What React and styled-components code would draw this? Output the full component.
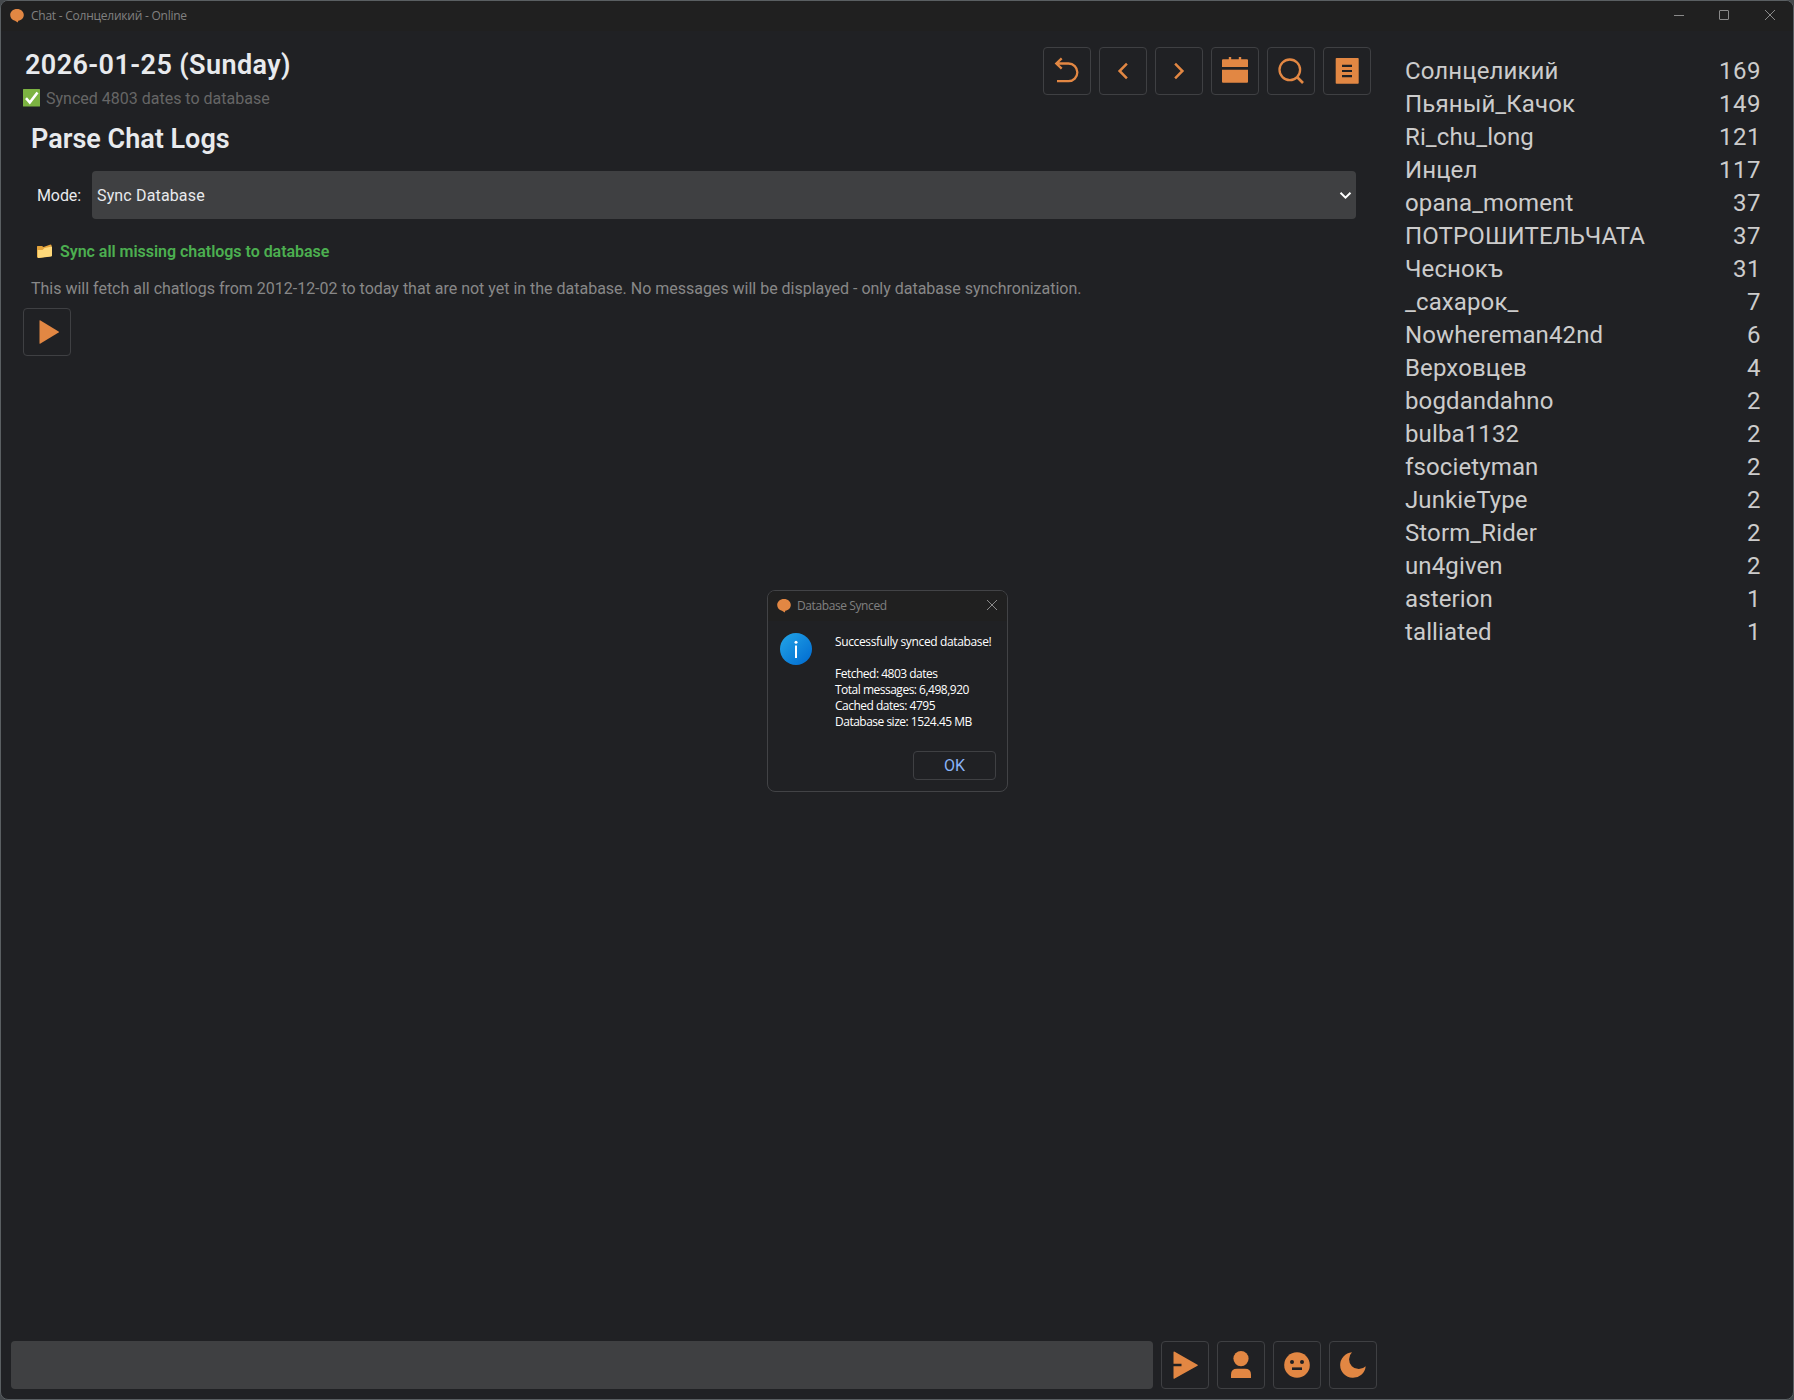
import React, { useState } from 'react';
import styled, { createGlobalStyle } from 'styled-components';

const ACCENT = '#e28743';

const GlobalStyle = createGlobalStyle`
  * {
    box-sizing: border-box;
  }

  body {
    margin: 0;
    background: #45494c;
    font-family: Roboto, sans-serif;
  }
`;

const Window = styled.div`
  position: relative;
  display: flex;
  flex-direction: column;
  width: 1794px;
  height: 1400px;
  overflow: hidden;
  background: #202124;
  border: 1px solid #5a5f62;
  border-radius: 8px;
`;

const TitleBar = styled.div`
  display: flex;
  align-items: center;
  flex: none;
  height: 30px;
  padding-left: 9px;
  background: #202020;
`;

const TitleText = styled.span`
  flex: 1;
  margin-left: ${({ $gap }) => $gap}px;
  color: #808080;
  font-family: 'Open Sans', 'Noto Sans', sans-serif;
  font-size: 12px;
  line-height: 16px;
  letter-spacing: ${({ $spacing }) => $spacing}px;
  white-space: nowrap;
`;

const CaptionButtons = styled.div`
  display: grid;
  grid-template-columns: 45px 46px 12px;
  padding: 0 17px 2px 0;
`;

const Content = styled.div`
  display: flex;
  flex: 1;
  min-height: 0;
`;

const Main = styled.main`
  display: flex;
  flex-direction: column;
  width: 1377px;
  padding: 16px 0 10px 10px;
`;

const Header = styled.header`
  display: flex;
  justify-content: space-between;
  height: 76px;
  padding: 0 7px 0 12px;
`;

const DateTitle = styled.h1`
  margin: 0 0 0 2px;
  color: #e8eaed;
  font-size: 27px;
  font-weight: 600;
  line-height: 36px;
  letter-spacing: 0.4px;
`;

const Status = styled.div`
  display: flex;
  align-items: center;
  gap: 6px;
  height: 30px;
  color: #666;
  font-size: 16px;
`;

const ButtonGroup = styled.div`
  display: flex;
  gap: 8px;
`;

const IconButton = styled.button`
  display: flex;
  align-items: center;
  justify-content: center;
  flex: none;
  width: 48px;
  height: 48px;
  padding: 0;
  color: ${ACCENT};
  background: transparent;
  border: 1px solid #3f4043;
  border-radius: 4px;
  cursor: pointer;
`;

const ParsePanel = styled.section`
  display: flex;
  flex-direction: column;
  flex: 1;
  padding: 0 22px 0 12px;
`;

const ParseTitle = styled.h2`
  margin: 0 0 16px 8px;
  color: #e8eaed;
  font-size: 27px;
  font-weight: 600;
  line-height: 32px;
`;

const ModeRow = styled.label`
  display: flex;
  align-items: center;
  color: #e8eaed;
  font-size: 16px;
`;

const ModeLabel = styled.span`
  width: 69px;
  padding-left: 14px;
  letter-spacing: -0.1px;
`;

const Select = styled.div`
  display: flex;
  align-items: center;
  justify-content: space-between;
  flex: 1;
  height: 48px;
  padding: 0 4px 0 5px;
  letter-spacing: 0.15px;
  background: #3f4042;
  border-radius: 4px;
`;

const SyncTitle = styled.div`
  display: flex;
  align-items: center;
  gap: 8px;
  height: 20px;
  margin: 22px 0 0 14px;
  color: #4caf50;
  font-size: 16px;
  font-weight: 600;
  letter-spacing: -0.03px;
`;

const Description = styled.p`
  margin: 18px 0 9px 8px;
  color: #888;
  font-size: 16px;
  line-height: 20px;
  letter-spacing: -0.01px;
`;

const Composer = styled.form`
  display: flex;
  gap: 8px;
`;

const MessageInput = styled.input`
  width: 1142px;
  height: 48px;
  padding: 0 8px;
  color: #e8eaed;
  font: 16px Roboto, sans-serif;
  background: #3f4042;
  border: 0;
  border-radius: 4px;
  outline: none;
`;

const UserList = styled.ul`
  flex: 1;
  margin: 0;
  padding: 24px 32px 0 27px;
  list-style: none;
`;

const UserRow = styled.li`
  display: flex;
  justify-content: space-between;
  color: #cccccc;
  font-size: 24px;
  line-height: 33px;
  letter-spacing: 0.12px;
`;

const UserCount = styled.span`
  letter-spacing: 0.5px;
`;

const Dialog = styled.div`
  position: absolute;
  top: 589px;
  left: 766px;
  display: flex;
  flex-direction: column;
  width: 241px;
  height: 202px;
  overflow: hidden;
  background: #202124;
  border: 1px solid #424346;
  border-radius: 8px;
`;

const DialogClose = styled.div`
  display: flex;
  padding: 0 9px 2px 0;
`;

const DialogBody = styled.div`
  display: flex;
  gap: 23px;
  height: 108px;
  padding: 12px 0 0 12px;
`;

const DialogText = styled.div`
  padding-top: 1px;
  color: #fff;
  font-family: 'Open Sans', 'Noto Sans', sans-serif;
  font-size: 12px;
  line-height: 16px;
`;

const DialogLine = styled.p`
  margin: ${({ $lead }) => ($lead ? '0 0 16px' : '0')};
  letter-spacing: ${({ $lead }) => ($lead ? -0.36 : -0.5)}px;
  white-space: nowrap;
`;

const OkButton = styled.button`
  align-self: flex-end;
  width: 83px;
  height: 29px;
  margin: 22px 11px 0 0;
  padding: 0;
  color: #8ab4f8;
  font: 16px Roboto, sans-serif;
  background: transparent;
  border: 1px solid #3f4043;
  border-radius: 4px;
`;

const BubbleIcon = () => (
  <svg width="14" height="14" viewBox="0 0 14 14" fill={ACCENT}>
    <path d="M7 0C3 0 .2 2.700.2 6c0 2.900 2 5 4.800 5.700L7.800 13.500 8.300 11.700C11.600 11.200 13.800 9 13.800 6 13.800 2.700 11 0 7 0Z" />
  </svg>
);

const MinimizeIcon = () => (
  <svg width="12" height="12" viewBox="0 0 12 12" stroke="#8a8a8a">
    <path d="M1 6.500H11" />
  </svg>
);

const MaximizeIcon = () => (
  <svg width="12" height="12" viewBox="0 0 12 12" fill="none" stroke="#8a8a8a">
    <rect x="1.500" y="1.500" width="9" height="9" rx="0.500" />
  </svg>
);

const CloseIcon = () => (
  <svg width="12" height="12" viewBox="0 0 12 12" stroke="#8a8a8a">
    <path d="M1 1 11 11M11 1 1 11" />
  </svg>
);

const CheckIcon = () => (
  <svg width="17" height="18" viewBox="0 0 17 18">
    <rect width="17" height="17.500" rx="0.500" fill="#7cb342" />
    <path d="M3 9.200 6.800 13.500 14.500 3.500" fill="none" stroke="#fff" strokeWidth="2.600" />
  </svg>
);

const FolderIcon = () => (
  <svg width="15" height="14" viewBox="0 0 15 14">
    <path d="M0 2.500Q0 2 .6 2H5L6.500 3 13.500.6 14.500 1V12L1 14 0 13Z" fill="#e3a33c" />
    <path d="M.7 6H5.500L7.500 4 15 2.500V11.500Q15 12.300 14.300 12.400L1.500 14Q.7 14 .7 13.300Z" fill="#ffd97a" />
  </svg>
);

const UndoIcon = () => (
  <svg width="46" height="46" viewBox="0 0 46 46" fill="none" stroke="currentColor" strokeWidth="2.300">
    <path d="M17.700 10.300 12.300 15.500 17.700 20.700M12.300 15.500H24.500A8.800 8.800 0 0 1 24.500 33.200H13" />
  </svg>
);

const PrevIcon = () => (
  <svg width="46" height="46" viewBox="0 0 46 46" fill="none" stroke="currentColor" strokeWidth="2.500">
    <path d="M26.900 15.700 19.600 23 26.900 30.300" />
  </svg>
);

const NextIcon = () => (
  <svg width="46" height="46" viewBox="0 0 46 46" fill="none" stroke="currentColor" strokeWidth="2.500">
    <path d="M19.100 15.700 26.400 23 19.100 30.300" />
  </svg>
);

const CalendarIcon = () => (
  <svg width="46" height="46" viewBox="0 0 46 46" fill="currentColor">
    <path d="M11 11.200H16.800V9H19.200V11.200H26.800V9H29.200V11.200H35Q36 11.200 36 12.200V19H10V12.200Q10 11.200 11 11.200Z" />
    <path d="M10 21.700H36V33.700Q36 34.700 35 34.700H11Q10 34.700 10 33.700Z" />
  </svg>
);

const SearchIcon = () => (
  <svg width="46" height="46" viewBox="0 0 46 46" fill="none" stroke="currentColor">
    <circle cx="21.800" cy="21.800" r="10.300" strokeWidth="2.300" />
    <path d="M29 29 35 35" strokeWidth="2.600" />
  </svg>
);

const NotesIcon = () => (
  <svg width="46" height="46" viewBox="0 0 46 46">
    <rect x="11.700" y="10" width="23" height="25.700" rx="0.800" fill="currentColor" />
    <path d="M18 17.800H28M18 23H28M18 28.200H28" stroke="#202124" strokeWidth="2.200" />
  </svg>
);

const PlayIcon = () => (
  <svg width="46" height="46" viewBox="0 0 46 46" fill="currentColor">
    <path d="M15.500 11.800Q15.500 10.800 16.500 11.400L34.600 22.400Q35.400 23 34.600 23.600L16.500 34.600Q15.500 35.200 15.500 34.200Z" />
  </svg>
);

const SendIcon = () => (
  <svg width="46" height="46" viewBox="0 0 46 46" fill="currentColor">
    <path d="M11.500 10.400Q11.500 9 12.700 9.700L35.500 22.700Q36.400 23.200 35.500 23.700L12.700 36.600Q11.500 37.300 11.500 36V24.200H19.500V21.800H11.500Z" />
  </svg>
);

const UserIcon = () => (
  <svg width="46" height="46" viewBox="0 0 46 46" fill="currentColor">
    <circle cx="23" cy="16.600" r="7.600" />
    <path d="M13 36V32.500Q13 26.700 19 26.700H27Q33 26.700 33 32.500V36Z" />
  </svg>
);

const FaceIcon = () => (
  <svg width="46" height="46" viewBox="0 0 46 46">
    <circle cx="23" cy="23" r="12.800" fill="currentColor" />
    <g fill="#202124">
      <circle cx="18" cy="20" r="2" />
      <circle cx="28" cy="20" r="2" />
      <rect x="18" y="25.400" width="10" height="2.600" />
    </g>
  </svg>
);

const MoonIcon = () => (
  <svg width="46" height="46" viewBox="0 0 46 46" fill="currentColor">
    <path d="M22 10.300A12.800 12.800 0 1 0 35.700 24.300 9.600 9.600 0 0 1 22 10.300Z" />
  </svg>
);

const ChevronDown = () => (
  <svg width="13" height="9" viewBox="0 0 13 9" fill="none" stroke="#fff" strokeWidth="2">
    <path d="M1.500 1.700 6.500 6.700 11.500 1.700" />
  </svg>
);

const InfoIcon = () => (
  <svg width="32" height="32" viewBox="0 0 32 32">
    <defs>
      <linearGradient id="info" x1="0" y1="0" x2="1" y2="1">
        <stop offset="0" stopColor="#23a6e8" />
        <stop offset="1" stopColor="#0069cf" />
      </linearGradient>
    </defs>
    <circle cx="16" cy="16" r="16" fill="url(#info)" />
    <circle cx="16" cy="9.300" r="1.500" fill="#fff" />
    <rect x="15" y="12.500" width="2" height="12.500" fill="#fff" />
  </svg>
);

const toolbar = [
  { name: 'Back', Icon: UndoIcon },
  { name: 'Previous day', Icon: PrevIcon },
  { name: 'Next day', Icon: NextIcon },
  { name: 'Calendar', Icon: CalendarIcon },
  { name: 'Search', Icon: SearchIcon },
  { name: 'Chat logs', Icon: NotesIcon },
];

const composerActions = [
  { name: 'Send', Icon: SendIcon },
  { name: 'Account', Icon: UserIcon },
  { name: 'Emoticons', Icon: FaceIcon },
  { name: 'Theme', Icon: MoonIcon },
];

const users = [
  { name: 'Солнцеликий', count: 169 },
  { name: 'Пьяный_Качок', count: 149 },
  { name: 'Ri_chu_long', count: 121 },
  { name: 'Инцел', count: 117 },
  { name: 'opana_moment', count: 37 },
  { name: 'ПОТРОШИТЕЛЬЧАТА', count: 37 },
  { name: 'Чеснокъ', count: 31 },
  { name: '_сахарок_', count: 7 },
  { name: 'Nowhereman42nd', count: 6 },
  { name: 'Верховцев', count: 4 },
  { name: 'bogdandahno', count: 2 },
  { name: 'bulba1132', count: 2 },
  { name: 'fsocietyman', count: 2 },
  { name: 'JunkieType', count: 2 },
  { name: 'Storm_Rider', count: 2 },
  { name: 'un4given', count: 2 },
  { name: 'asterion', count: 1 },
  { name: 'talliated', count: 1 },
];

const syncStats = [
  'Fetched: 4803 dates',
  'Total messages: 6,498,920',
  'Cached dates: 4795',
  'Database size: 1524.45 MB',
];

function App() {
  const [message, setMessage] = useState('');
  const [dialogOpen, setDialogOpen] = useState(true);

  return (
    <>
      <GlobalStyle />
      <Window>
        <TitleBar>
          <BubbleIcon />
          <TitleText $gap={7} $spacing={-0.24}>Chat - Солнцеликий - Online</TitleText>
          <CaptionButtons>
            <MinimizeIcon />
            <MaximizeIcon />
            <CloseIcon />
          </CaptionButtons>
        </TitleBar>

        <Content>
          <Main>
            <Header>
              <div>
                <DateTitle>2026-01-25 (Sunday)</DateTitle>
                <Status>
                  <CheckIcon />
                  Synced 4803 dates to database
                </Status>
              </div>
              <ButtonGroup>
                {toolbar.map(({ name, Icon }) => (
                  <IconButton key={name} aria-label={name}>
                    <Icon />
                  </IconButton>
                ))}
              </ButtonGroup>
            </Header>

            <ParsePanel>
              <ParseTitle>Parse Chat Logs</ParseTitle>
              <ModeRow>
                <ModeLabel>Mode:</ModeLabel>
                <Select>
                  Sync Database
                  <ChevronDown />
                </Select>
              </ModeRow>
              <SyncTitle>
                <FolderIcon />
                Sync all missing chatlogs to database
              </SyncTitle>
              <Description>
                This will fetch all chatlogs from 2012-12-02 to today that are not yet in the database. No
                messages will be displayed - only database synchronization.
              </Description>
              <IconButton aria-label="Start">
                <PlayIcon />
              </IconButton>
            </ParsePanel>

            <Composer onSubmit={(e) => e.preventDefault()}>
              <MessageInput value={message} onChange={(e) => setMessage(e.target.value)} />
              {composerActions.map(({ name, Icon }) => (
                <IconButton key={name} type="button" aria-label={name}>
                  <Icon />
                </IconButton>
              ))}
            </Composer>
          </Main>

          <UserList>
            {users.map((user) => (
              <UserRow key={user.name}>
                <span>{user.name}</span>
                <UserCount>{user.count}</UserCount>
              </UserRow>
            ))}
          </UserList>
        </Content>

        {dialogOpen && (
          <Dialog>
            <TitleBar>
              <BubbleIcon />
              <TitleText $gap={6} $spacing={-0.4}>Database Synced</TitleText>
              <DialogClose>
                <CloseIcon />
              </DialogClose>
            </TitleBar>
            <DialogBody>
              <InfoIcon />
              <DialogText>
                <DialogLine $lead>Successfully synced database!</DialogLine>
                {syncStats.map((line) => (
                  <DialogLine key={line}>{line}</DialogLine>
                ))}
              </DialogText>
            </DialogBody>
            <OkButton onClick={() => setDialogOpen(false)}>OK</OkButton>
          </Dialog>
        )}
      </Window>
    </>
  );
}

export default App;
